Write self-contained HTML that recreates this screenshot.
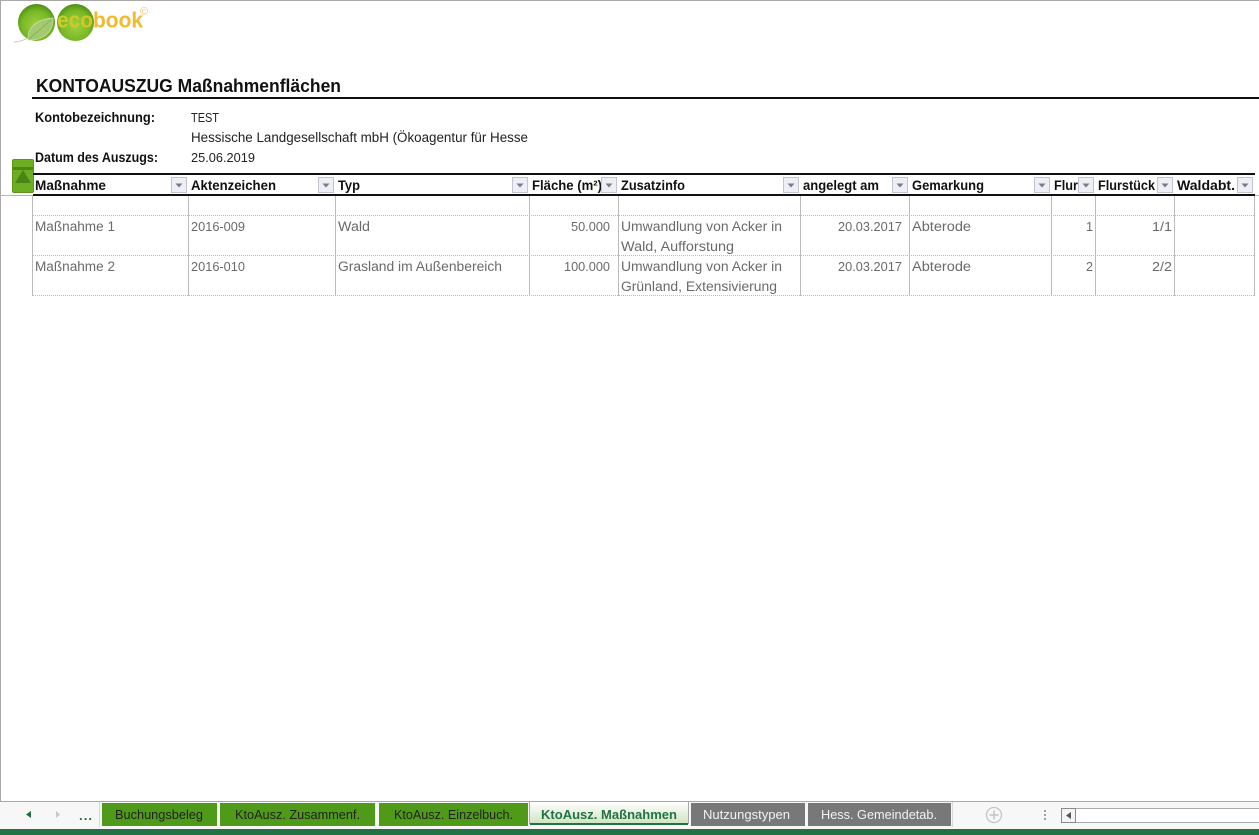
<!DOCTYPE html>
<html lang="de">
<head>
<meta charset="utf-8">
<title>KONTOAUSZUG Maßnahmenflächen</title>
<style>
html,body{margin:0;padding:0;background:#fff;width:1259px;height:835px;overflow:hidden}
svg{display:block;position:absolute;left:0;top:0}
text{font-family:"Liberation Sans",sans-serif}
.b{font-weight:700;font-size:13.5px;fill:#111}
.n{font-size:13.5px;fill:#222}
.d{font-size:13px;fill:#222}
.g{font-size:13.5px;fill:#6a6a6a}
.gd{font-size:13px;fill:#6a6a6a}
.t{font-size:13px;fill:#222}
</style>
</head>
<body>
<svg width="1259" height="835" viewBox="0 0 1259 835" xmlns="http://www.w3.org/2000/svg">
<defs>
<radialGradient id="ball" cx="50%" cy="58%" r="60%">
<stop offset="0" stop-color="#a0d33f"/><stop offset=".65" stop-color="#7ab826"/><stop offset=".9" stop-color="#559a16"/><stop offset="1" stop-color="#417f0c"/>
</radialGradient>
<linearGradient id="act" x1="0" y1="0" x2="0" y2="1">
<stop offset="0" stop-color="#ffffff"/><stop offset="1" stop-color="#cfe3c0"/>
</linearGradient>
<linearGradient id="logoT" gradientUnits="userSpaceOnUse" x1="57" y1="0" x2="143" y2="0">
<stop offset="0" stop-color="#c9cf2c"/><stop offset=".4" stop-color="#d8c228"/><stop offset=".44" stop-color="#f2bb2e"/><stop offset="1" stop-color="#f2bb2e"/>
</linearGradient>
<symbol id="dd" viewBox="0 0 16 16" width="16" height="16">
<rect x=".5" y=".5" width="15" height="15" fill="#eceff6" stroke="#c0c5cf"/>
<path d="M4.500 6.500h7L8 10.500z" fill="#777c85"/>
</symbol>
</defs>

<!-- sheet frame -->
<rect x="0" y="0" width="1259" height="1" fill="#a9a9a9"/>
<rect x="0" y="0" width="1" height="802" fill="#a9a9a9"/>
<rect x="0" y="801" width="1259" height="1" fill="#a9a9a9"/>

<!-- logo -->
<path d="M14 42C20 41.500 25 40 30 37" stroke="#c9c9bd" stroke-width="1" fill="none"/>
<circle cx="36.500" cy="22.500" r="18.500" fill="url(#ball)"/>
<circle cx="75.500" cy="22.500" r="18.500" fill="url(#ball)"/>
<path d="M28 40C27 28 37 19 53 18C54 31 43 41 28 40Z" fill="#a6cb78" stroke="#d5e6b8" stroke-width=".7" opacity=".9"/>
<path d="M29 39C36 33 43 27 51 20" stroke="#7fae4a" stroke-width=".8" fill="none"/>
<text x="57" y="27.500" font-size="22" font-weight="700" fill="url(#logoT)" textLength="86" lengthAdjust="spacingAndGlyphs">ecobook</text>
<text x="140" y="15" font-size="11" fill="#e9c56a">©</text>

<!-- headings -->
<text x="36" y="92" font-size="18.500" font-weight="700" fill="#111" textLength="305" lengthAdjust="spacingAndGlyphs">KONTOAUSZUG Maßnahmenflächen</text>
<rect x="32" y="97" width="1227" height="2" fill="#111"/>
<text class="b" x="35" y="122" textLength="120" lengthAdjust="spacingAndGlyphs">Kontobezeichnung:</text>
<text x="191" y="122" font-size="12.500" fill="#222" textLength="28" lengthAdjust="spacingAndGlyphs">TEST</text>
<svg x="0" y="125" width="529" height="24"><text class="n" x="191" y="17" textLength="337" lengthAdjust="spacingAndGlyphs">Hessische Landgesellschaft mbH (Ökoagentur für Hesse</text></svg>
<text class="b" x="35" y="162" textLength="123" lengthAdjust="spacingAndGlyphs">Datum des Auszugs:</text>
<text class="d" x="191" y="162" textLength="64" lengthAdjust="spacingAndGlyphs">25.06.2019</text>

<!-- green collapse button -->
<rect x="12.500" y="159.500" width="21" height="33" rx="1.500" fill="#6cad22" stroke="#5b9519"/>
<rect x="13" y="167" width="20" height="3" fill="#4c8714"/>
<path d="M23 170L31 183H15Z" fill="#4a8414"/>

<!-- table header -->
<rect x="33" y="173" width="1222" height="2" fill="#111"/>
<rect x="33" y="194" width="1222" height="2" fill="#111"/>
<rect x="0" y="195" width="33" height="1" fill="#b5b5b5"/>
<rect x="1255" y="195" width="4" height="1" fill="#b5b5b5"/>

<text class="b" x="35" y="190" textLength="71" lengthAdjust="spacingAndGlyphs">Maßnahme</text>
<text class="b" x="191" y="190" textLength="85" lengthAdjust="spacingAndGlyphs">Aktenzeichen</text>
<text class="b" x="338" y="190" textLength="22" lengthAdjust="spacingAndGlyphs">Typ</text>
<text class="b" x="532" y="190" textLength="70" lengthAdjust="spacingAndGlyphs">Fläche (m²)</text>
<text class="b" x="621" y="190" textLength="64" lengthAdjust="spacingAndGlyphs">Zusatzinfo</text>
<text class="b" x="803" y="190" textLength="76" lengthAdjust="spacingAndGlyphs">angelegt am</text>
<text class="b" x="912" y="190" textLength="72" lengthAdjust="spacingAndGlyphs">Gemarkung</text>
<text class="b" x="1054" y="190" textLength="24" lengthAdjust="spacingAndGlyphs">Flur</text>
<text class="b" x="1098" y="190" textLength="57" lengthAdjust="spacingAndGlyphs">Flurstück</text>
<text class="b" x="1177" y="190" textLength="58" lengthAdjust="spacingAndGlyphs">Waldabt.</text>

<use href="#dd" x="171" y="177"/>
<use href="#dd" x="318" y="177"/>
<use href="#dd" x="512" y="177"/>
<use href="#dd" x="601" y="177"/>
<use href="#dd" x="783" y="177"/>
<use href="#dd" x="892" y="177"/>
<use href="#dd" x="1034" y="177"/>
<use href="#dd" x="1078" y="177"/>
<use href="#dd" x="1157" y="177"/>
<use href="#dd" x="1237" y="177"/>

<!-- grid -->
<g fill="#bbbbbb">
<rect x="32" y="196" width="1" height="100"/>
<rect x="188" y="196" width="1" height="100"/>
<rect x="335" y="196" width="1" height="100"/>
<rect x="529" y="196" width="1" height="100"/>
<rect x="618" y="196" width="1" height="100"/>
<rect x="800" y="196" width="1" height="100"/>
<rect x="909" y="196" width="1" height="100"/>
<rect x="1051" y="196" width="1" height="100"/>
<rect x="1095" y="196" width="1" height="100"/>
<rect x="1174" y="196" width="1" height="100"/>
<rect x="1254" y="196" width="1" height="100"/>
</g>
<g stroke="#bbbbbb" stroke-width="1" stroke-dasharray="1 1">
<path d="M33 215.500H1255"/>
<path d="M33 255.500H1255"/>
<path d="M33 295.500H1255"/>
</g>

<!-- rows -->
<text class="g" x="35" y="231" textLength="80" lengthAdjust="spacingAndGlyphs">Maßnahme 1</text>
<text class="gd" x="191" y="231" textLength="54" lengthAdjust="spacingAndGlyphs">2016-009</text>
<text class="g" x="338" y="231" textLength="32" lengthAdjust="spacingAndGlyphs">Wald</text>
<text class="gd" x="571" y="231" textLength="39" lengthAdjust="spacingAndGlyphs">50.000</text>
<text class="g" x="621" y="231" textLength="161" lengthAdjust="spacingAndGlyphs">Umwandlung von Acker in</text>
<text class="g" x="621" y="251" textLength="113" lengthAdjust="spacingAndGlyphs">Wald, Aufforstung</text>
<text class="gd" x="838" y="231" textLength="64" lengthAdjust="spacingAndGlyphs">20.03.2017</text>
<text class="g" x="912" y="231" textLength="59" lengthAdjust="spacingAndGlyphs">Abterode</text>
<text class="gd" x="1086" y="231" textLength="7" lengthAdjust="spacingAndGlyphs">1</text>
<text class="gd" x="1152" y="231" textLength="20" lengthAdjust="spacingAndGlyphs">1/1</text>

<text class="g" x="35" y="271" textLength="80" lengthAdjust="spacingAndGlyphs">Maßnahme 2</text>
<text class="gd" x="191" y="271" textLength="54" lengthAdjust="spacingAndGlyphs">2016-010</text>
<text class="g" x="338" y="271" textLength="164" lengthAdjust="spacingAndGlyphs">Grasland im Außenbereich</text>
<text class="gd" x="564" y="271" textLength="46" lengthAdjust="spacingAndGlyphs">100.000</text>
<text class="g" x="621" y="271" textLength="161" lengthAdjust="spacingAndGlyphs">Umwandlung von Acker in</text>
<text class="g" x="621" y="291" textLength="156" lengthAdjust="spacingAndGlyphs">Grünland, Extensivierung</text>
<text class="gd" x="838" y="271" textLength="64" lengthAdjust="spacingAndGlyphs">20.03.2017</text>
<text class="g" x="912" y="271" textLength="59" lengthAdjust="spacingAndGlyphs">Abterode</text>
<text class="gd" x="1086" y="271" textLength="7" lengthAdjust="spacingAndGlyphs">2</text>
<text class="gd" x="1152" y="271" textLength="20" lengthAdjust="spacingAndGlyphs">2/2</text>

<!-- tab strip -->
<rect x="0" y="802" width="1259" height="27" fill="#f7f7f7"/>
<rect x="0" y="829" width="1259" height="6" fill="#217346"/>
<path d="M31 811V818L26 814.500Z" fill="#1f6d40"/>
<path d="M56 811V818L60 814.500Z" fill="#c8c8c8"/>
<text x="79" y="820" font-size="13" font-weight="700" fill="#1f6d40" textLength="13">...</text>
<rect x="99" y="802" width="1" height="25" fill="#d8d8d8"/>

<rect x="102" y="803" width="115" height="23" fill="#4f9b19"/>
<rect x="220" y="803" width="155" height="23" fill="#4f9b19"/>
<rect x="379" y="803" width="149" height="23" fill="#4f9b19"/>
<rect x="691" y="803" width="114" height="23" fill="#787878"/>
<rect x="808" y="803" width="143" height="23" fill="#787878"/>
<rect x="952" y="802" width="1" height="25" fill="#d8d8d8"/>

<path d="M529.500 802V824" stroke="#a9a9a9"/>
<path d="M688.500 802V824" stroke="#a9a9a9"/>
<rect x="530" y="802" width="158" height="22" fill="url(#act)"/>
<rect x="530" y="823" width="158" height="2" fill="#217346"/>

<text class="t" x="115" y="819" textLength="88" lengthAdjust="spacingAndGlyphs">Buchungsbeleg</text>
<text class="t" x="235" y="819" textLength="125" lengthAdjust="spacingAndGlyphs">KtoAusz. Zusammenf.</text>
<text class="t" x="394" y="819" textLength="119" lengthAdjust="spacingAndGlyphs">KtoAusz. Einzelbuch.</text>
<text x="541" y="819" font-size="13" font-weight="700" fill="#217346" textLength="136" lengthAdjust="spacingAndGlyphs">KtoAusz. Maßnahmen</text>
<text x="703" y="819" font-size="13" fill="#f2f2f2" textLength="87" lengthAdjust="spacingAndGlyphs">Nutzungstypen</text>
<text x="821" y="819" font-size="13" fill="#f2f2f2" textLength="116" lengthAdjust="spacingAndGlyphs">Hess. Gemeindetab.</text>

<!-- add sheet -->
<circle cx="994" cy="815" r="7.500" fill="none" stroke="#c4c4c4" stroke-width="1.300"/>
<path d="M994 810.500V819.500M989.500 815H998.500" stroke="#c4c4c4" stroke-width="1.500"/>
<g fill="#a0a0a0">
<rect x="1044" y="810" width="2" height="2"/>
<rect x="1044" y="814" width="2" height="2"/>
<rect x="1044" y="818" width="2" height="2"/>
</g>

<!-- scrollbar -->
<rect x="1061.500" y="808.500" width="198" height="14" fill="#fff" stroke="#ababab"/>
<rect x="1061.500" y="808.500" width="14" height="14" fill="#f5f5f5" stroke="#8a8a8a"/>
<path d="M1071 812V819L1066 815.500Z" fill="#555"/>
</svg>
</body>
</html>
